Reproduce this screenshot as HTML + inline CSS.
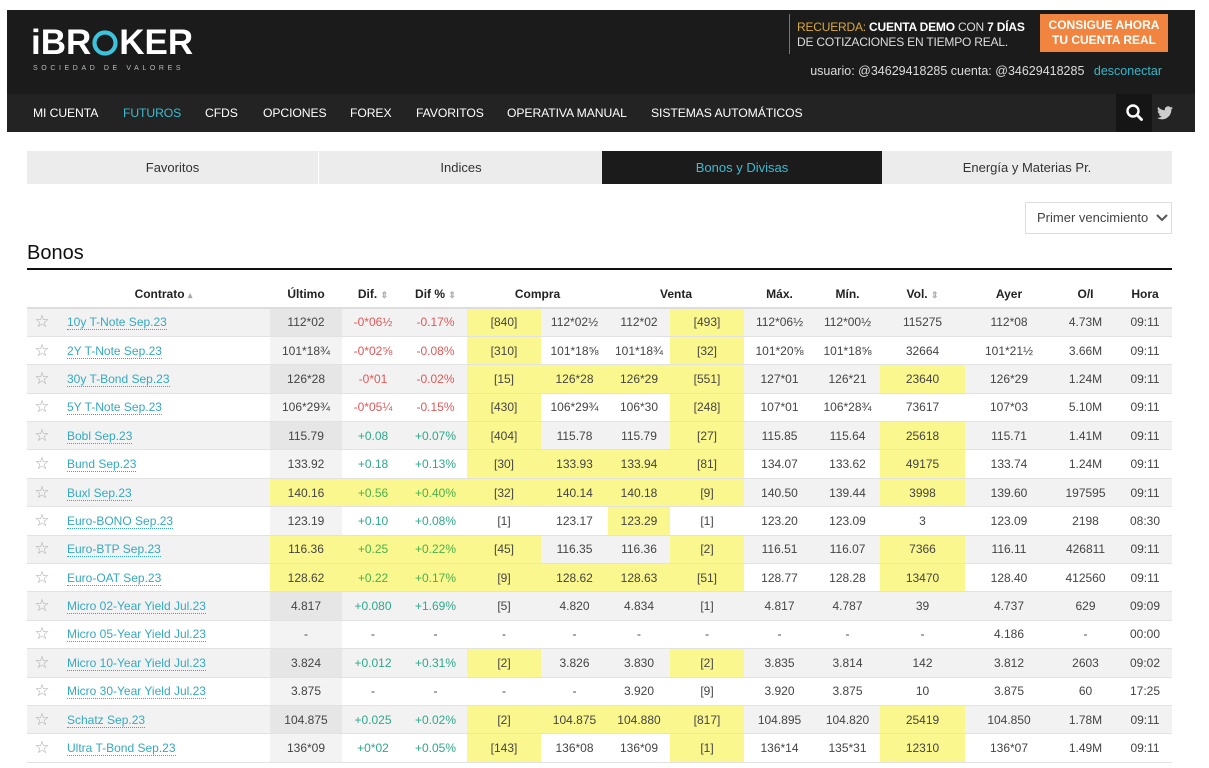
<!DOCTYPE html>
<html><head><meta charset="utf-8"><style>
*{margin:0;padding:0;box-sizing:border-box}
body{width:1209px;height:768px;background:#fff;font-family:"Liberation Sans",Arial,sans-serif;position:relative;overflow:hidden;color:#333}
.hdr{position:absolute;left:7px;top:10px;width:1188px;height:84px;background:#1b1b1b}
.logo{position:absolute;left:24px;top:13px;color:#fff;font-size:35px;letter-spacing:0px;font-weight:bold}
.sub{position:absolute;left:26px;top:55px;color:#bbb;font-size:7px;letter-spacing:3.6px}
.rec{position:absolute;left:782px;top:4px;height:40px;border-left:1px solid #777;padding-left:7px;color:#ddd;font-size:12px;line-height:15px;padding-top:6px;letter-spacing:-0.2px;white-space:nowrap}
.rec .o{color:#d9a93a}
.btn{position:absolute;left:1033px;top:4px;width:128px;height:38px;background:#f1853f;color:#fff;font-weight:bold;font-size:12px;text-align:center;line-height:15px;padding-top:4px}
.usr{position:absolute;right:33px;top:54px;color:#ddd;font-size:12.5px}
.usr span{color:#38b6c9;margin-left:6px}
.nav{position:absolute;left:7px;top:94px;width:1188px;height:38px;background:#232323}
.nav a{position:absolute;top:12px;color:#fff;font-size:12.2px;text-decoration:none;letter-spacing:-0.1px}
.srch{position:absolute;left:1109px;top:0;width:36px;height:38px;background:#151515}
.tabs{position:absolute;left:27px;top:151px;width:1145px;height:33px;background:#ececec}
.tabs div{position:absolute;top:0;height:33px;text-align:center;line-height:33px;font-size:13px;color:#333}
.tabs div.a{background:#1b1b1b;color:#3dbbd0}
.dd{position:absolute;left:1025px;top:202px;width:147px;height:32px;border:1px solid #ddd;font-size:13px;color:#444;line-height:30px;padding-left:11px}
h2{position:absolute;left:27px;top:242px;font-size:20px;font-weight:normal;color:#111}
.line{position:absolute;left:27px;top:268px;width:1145px;height:2px;background:#111}
table{position:absolute;left:27px;top:280px;width:1145px;border-collapse:collapse;font-size:12px;table-layout:fixed}
th{height:28px;font-weight:bold;color:#222;text-align:center;border-bottom:2px solid #ddd}
td{height:28.4px;text-align:center;color:#444;border-bottom:1px solid #e2e2e2}
tr.o td{background:#f2f2f2}
tr.o td.u{background:#e6e6e6}
tr.e td.u{background:#f3f3f3}
td.c{text-align:left;padding-left:10px}
td.c span{color:#35a9bf;border-bottom:1px dotted #35a9bf}
tr td.y{background:#fbf78f}
.r{color:#e05858}.g{color:#2fa88c}.gg{color:#4cb04c}
.s{font-size:9px;color:#aaa}
</style></head><body>
<div class="hdr">
<div class="logo">iBR<svg width="28" height="26" viewBox="0 0 28 26" style="vertical-align:-2px"><circle cx="14" cy="13" r="10.5" fill="none" stroke="#3cc3dc" stroke-width="4.2"/></svg>KER</div>
<div class="sub">SOCIEDAD DE VALORES</div>
<div class="rec"><span class="o">RECUERDA:</span> <b style="color:#fff">CUENTA DEMO</b> CON <b style="color:#fff">7 DÍAS</b><br>DE COTIZACIONES EN TIEMPO REAL.</div>
<div class="btn">CONSIGUE AHORA<br>TU CUENTA REAL</div>
<div class="usr">usuario: @34629418285 cuenta: @34629418285 <span>desconectar</span></div>
</div>
<div class="nav">
<a style="left:26px">MI CUENTA</a><a style="left:116px;color:#3dbbd0">FUTUROS</a><a style="left:198px">CFDS</a><a style="left:256px">OPCIONES</a><a style="left:343px">FOREX</a><a style="left:409px">FAVORITOS</a><a style="left:500px">OPERATIVA MANUAL</a><a style="left:644px">SISTEMAS AUTOMÁTICOS</a>
<div class="srch"><svg width="36" height="38" viewBox="0 0 36 38"><circle cx="17" cy="17" r="5.5" fill="none" stroke="#fff" stroke-width="2.4"/><path d="M21 21l4.5 4.5" stroke="#fff" stroke-width="2.8" stroke-linecap="round"/></svg></div>
<svg style="position:absolute;left:1150px;top:12px" width="16" height="14" viewBox="0 0 24 20"><path d="M24 2.4a10 10 0 0 1-2.8.8A5 5 0 0 0 23.3.4a9.8 9.8 0 0 1-3.1 1.2A4.9 4.9 0 0 0 11.8 6 14 14 0 0 1 1.7.9a4.9 4.9 0 0 0 1.5 6.6A4.9 4.9 0 0 1 1 6.9a4.9 4.9 0 0 0 3.9 4.8 4.9 4.9 0 0 1-2.2.1 4.9 4.9 0 0 0 4.6 3.4A9.9 9.9 0 0 1 0 17.3 14 14 0 0 0 7.5 19.5c9 0 14-7.5 14-14v-.6A10 10 0 0 0 24 2.4z" fill="#ccc"/></svg>
</div>
<div class="tabs"><div style="left:0;width:292px;border-right:1px solid #fff">Favoritos</div><div style="left:293px;width:282px">Indices</div><div class="a" style="left:575px;width:280px">Bonos y Divisas</div><div style="left:855px;width:290px">Energía y Materias Pr.</div></div>
<div class="dd">Primer vencimiento <svg width="12" height="8" viewBox="0 0 12 8" style="margin-left:4px"><path d="M1 1l5 5 5-5" fill="none" stroke="#555" stroke-width="2"/></svg></div>
<h2>Bonos</h2><div class="line"></div>
<table>
<colgroup><col style="width:30px"><col style="width:213px"><col style="width:72px"><col style="width:62px"><col style="width:63px"><col style="width:74px"><col style="width:67px"><col style="width:62px"><col style="width:74px"><col style="width:71px"><col style="width:65px"><col style="width:85px"><col style="width:88px"><col style="width:65px"><col style="width:54px"></colgroup>
<tr><th></th><th>Contrato <span class="s">▴</span></th><th>Último</th><th>Dif. <span class="s">⇕</span></th><th>Dif % <span class="s">⇕</span></th><th colspan="2">Compra</th><th colspan="2">Venta</th><th>Máx.</th><th>Mín.</th><th>Vol. <span class="s">⇕</span></th><th>Ayer</th><th>O/I</th><th>Hora</th></tr>
<tr class="o"><td>☆</td><td class="c"><span>10y T-Note Sep.23</span></td><td class="u">112*02</td><td class="r">-0*06½</td><td class="r">-0.17%</td><td class="y">[840]</td><td>112*02½</td><td>112*02</td><td class="y">[493]</td><td>112*06½</td><td>112*00½</td><td>115275</td><td>112*08</td><td>4.73M</td><td>09:11</td></tr>
<tr class="e"><td>☆</td><td class="c"><span>2Y T-Note Sep.23</span></td><td class="u">101*18¾</td><td class="r">-0*02⅝</td><td class="r">-0.08%</td><td class="y">[310]</td><td>101*18⅝</td><td>101*18¾</td><td class="y">[32]</td><td>101*20⅝</td><td>101*18⅝</td><td>32664</td><td>101*21½</td><td>3.66M</td><td>09:11</td></tr>
<tr class="o"><td>☆</td><td class="c"><span>30y T-Bond Sep.23</span></td><td class="u">126*28</td><td class="r">-0*01</td><td class="r">-0.02%</td><td class="y">[15]</td><td class="y">126*28</td><td class="y">126*29</td><td class="y">[551]</td><td>127*01</td><td>126*21</td><td class="y">23640</td><td>126*29</td><td>1.24M</td><td>09:11</td></tr>
<tr class="e"><td>☆</td><td class="c"><span>5Y T-Note Sep.23</span></td><td class="u">106*29¾</td><td class="r">-0*05¼</td><td class="r">-0.15%</td><td class="y">[430]</td><td>106*29¾</td><td>106*30</td><td class="y">[248]</td><td>107*01</td><td>106*28¾</td><td>73617</td><td>107*03</td><td>5.10M</td><td>09:11</td></tr>
<tr class="o"><td>☆</td><td class="c"><span>Bobl Sep.23</span></td><td class="u">115.79</td><td class="g">+0.08</td><td class="g">+0.07%</td><td class="y">[404]</td><td>115.78</td><td>115.79</td><td class="y">[27]</td><td>115.85</td><td>115.64</td><td class="y">25618</td><td>115.71</td><td>1.41M</td><td>09:11</td></tr>
<tr class="e"><td>☆</td><td class="c"><span>Bund Sep.23</span></td><td class="u">133.92</td><td class="g">+0.18</td><td class="g">+0.13%</td><td class="y">[30]</td><td class="y">133.93</td><td class="y">133.94</td><td class="y">[81]</td><td>134.07</td><td>133.62</td><td class="y">49175</td><td>133.74</td><td>1.24M</td><td>09:11</td></tr>
<tr class="o"><td>☆</td><td class="c"><span>Buxl Sep.23</span></td><td class="y">140.16</td><td class="y gg">+0.56</td><td class="y gg">+0.40%</td><td class="y">[32]</td><td class="y">140.14</td><td class="y">140.18</td><td class="y">[9]</td><td>140.50</td><td>139.44</td><td class="y">3998</td><td>139.60</td><td>197595</td><td>09:11</td></tr>
<tr class="e"><td>☆</td><td class="c"><span>Euro-BONO Sep.23</span></td><td class="u">123.19</td><td class="g">+0.10</td><td class="g">+0.08%</td><td>[1]</td><td>123.17</td><td class="y">123.29</td><td>[1]</td><td>123.20</td><td>123.09</td><td>3</td><td>123.09</td><td>2198</td><td>08:30</td></tr>
<tr class="o"><td>☆</td><td class="c"><span>Euro-BTP Sep.23</span></td><td class="y">116.36</td><td class="y gg">+0.25</td><td class="y gg">+0.22%</td><td class="y">[45]</td><td>116.35</td><td>116.36</td><td class="y">[2]</td><td>116.51</td><td>116.07</td><td class="y">7366</td><td>116.11</td><td>426811</td><td>09:11</td></tr>
<tr class="e"><td>☆</td><td class="c"><span>Euro-OAT Sep.23</span></td><td class="y">128.62</td><td class="y gg">+0.22</td><td class="y gg">+0.17%</td><td class="y">[9]</td><td class="y">128.62</td><td class="y">128.63</td><td class="y">[51]</td><td>128.77</td><td>128.28</td><td class="y">13470</td><td>128.40</td><td>412560</td><td>09:11</td></tr>
<tr class="o"><td>☆</td><td class="c"><span>Micro 02-Year Yield Jul.23</span></td><td class="u">4.817</td><td class="g">+0.080</td><td class="g">+1.69%</td><td>[5]</td><td>4.820</td><td>4.834</td><td>[1]</td><td>4.817</td><td>4.787</td><td>39</td><td>4.737</td><td>629</td><td>09:09</td></tr>
<tr class="e"><td>☆</td><td class="c"><span>Micro 05-Year Yield Jul.23</span></td><td class="u">-</td><td>-</td><td>-</td><td>-</td><td>-</td><td>-</td><td>-</td><td>-</td><td>-</td><td>-</td><td>4.186</td><td>-</td><td>00:00</td></tr>
<tr class="o"><td>☆</td><td class="c"><span>Micro 10-Year Yield Jul.23</span></td><td class="u">3.824</td><td class="g">+0.012</td><td class="g">+0.31%</td><td class="y">[2]</td><td>3.826</td><td>3.830</td><td class="y">[2]</td><td>3.835</td><td>3.814</td><td>142</td><td>3.812</td><td>2603</td><td>09:02</td></tr>
<tr class="e"><td>☆</td><td class="c"><span>Micro 30-Year Yield Jul.23</span></td><td class="u">3.875</td><td>-</td><td>-</td><td>-</td><td>-</td><td>3.920</td><td>[9]</td><td>3.920</td><td>3.875</td><td>10</td><td>3.875</td><td>60</td><td>17:25</td></tr>
<tr class="o"><td>☆</td><td class="c"><span>Schatz Sep.23</span></td><td class="u">104.875</td><td class="g">+0.025</td><td class="g">+0.02%</td><td class="y">[2]</td><td class="y">104.875</td><td class="y">104.880</td><td class="y">[817]</td><td>104.895</td><td>104.820</td><td class="y">25419</td><td>104.850</td><td>1.78M</td><td>09:11</td></tr>
<tr class="e"><td>☆</td><td class="c"><span>Ultra T-Bond Sep.23</span></td><td class="u">136*09</td><td class="g">+0*02</td><td class="g">+0.05%</td><td class="y">[143]</td><td>136*08</td><td>136*09</td><td class="y">[1]</td><td>136*14</td><td>135*31</td><td class="y">12310</td><td>136*07</td><td>1.49M</td><td>09:11</td></tr>
</table>
<style>td:first-child{color:#aaa;font-size:17px}</style>
</body></html>
